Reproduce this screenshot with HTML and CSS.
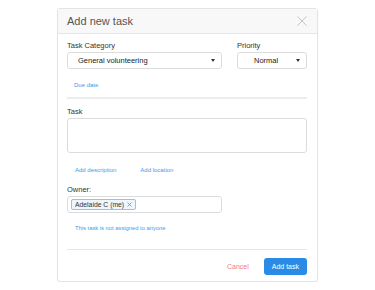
FILE: index.html
```html
<!DOCTYPE html>
<html lang="en">
<head>
  <meta charset="utf-8">
  <title>Add new task</title>
  <link rel="stylesheet" href="styles.css">
</head>
<body>
  <div class="modal">
    <div class="modal-header">
      <h2>Add new task</h2>
      <span class="close">
        <svg width="10" height="10" viewBox="0 0 10 10"><path d="M0.5 0.5L9.5 9.5M9.5 0.5L0.5 9.5" stroke="#c4c4c4" stroke-width="1" fill="none"/></svg>
      </span>
    </div>
    <div class="modal-body">
      <div class="row">
        <div class="field category">
          <label>Task Category</label>
          <div class="select">
            <span class="value">General volunteering</span>
            <span class="caret"></span>
          </div>
        </div>
        <div class="field priority">
          <label>Priority</label>
          <div class="select center">
            <span class="value">Normal</span>
            <span class="caret"></span>
          </div>
        </div>
      </div>
      <a class="link due" href="#">Due date</a>
      <hr>
      <label>Task</label>
      <div class="textarea"></div>
      <div class="links">
        <a class="link" href="#">Add description</a>
        <a class="link" href="#">Add location</a>
      </div>
      <label class="owner-label">Owner:</label>
      <div class="owner-input">
        <span class="chip">Adelaide C (me)
          <svg width="5" height="5" viewBox="0 0 5 5"><path d="M0.5 0.5L4.5 4.5M4.5 0.5L0.5 4.5" stroke="#3d9be9" stroke-width="0.8" fill="none"/></svg>
        </span>
      </div>
      <a class="link assign" href="#">This task is not assigned to anyone</a>
      <hr class="bottom">
      <div class="footer">
        <a class="cancel" href="#">Cancel</a>
        <button class="btn">Add task</button>
      </div>
    </div>
  </div>
</body>
</html>
```

FILE: styles.css
```css
*, :after, :before { box-sizing: border-box; }
body {
  margin: 0;
  padding: 8px 0 0 57px;
  background: #fff;
  font-family: "Liberation Sans", Arial, sans-serif;
  color: #333;
}
.modal {
  width: 261px;
  border: 1px solid #e4e4e4;
  border-radius: 3px;
  background: #fff;
  box-shadow: 0 1px 2px rgba(0, 0, 0, .04);
}
.modal-header {
  display: flex;
  justify-content: space-between;
  align-items: center;
  height: 25px;
  padding: 0 10px 0 9px;
  background: #f8f8f8;
  border-bottom: 1px solid #e6e6e6;
}
.modal-header h2 {
  margin: 0;
  font-size: 11px;
  font-weight: normal;
  color: #555;
}
.close { display: flex; }
.modal-body {
  padding: 7px 10px 6px 9px;
}
label {
  display: block;
  font-size: 7.5px;
  line-height: 10px;
  color: #333;
  margin-bottom: 1px;
}
.row {
  display: flex;
  justify-content: space-between;
}
.category { width: 155px; }
.priority { width: 70px; }
.select {
  display: flex;
  align-items: center;
  justify-content: space-between;
  height: 17px;
  padding: 0 6px 0 10px;
  border: 1px solid #dcdcdc;
  border-radius: 3px;
  font-size: 7.5px;
  color: #222;
}
.select.center { padding-left: 16px; }
.caret {
  width: 0;
  height: 0;
  border-left: 2px solid transparent;
  border-right: 2px solid transparent;
  border-top: 3px solid #333;
}
.link {
  display: block;
  font-size: 6px;
  line-height: 8px;
  color: #3d9be9;
  text-decoration: none;
}
.due {
  margin: 12px 0 0 7px;
}
hr {
  border: none;
  border-top: 2px solid #ececec;
  margin: 8px 0 8px;
}
.textarea {
  height: 35px;
  border: 1px solid #dcdcdc;
  border-radius: 3px;
}
.links {
  display: flex;
  gap: 24px;
  margin: 13px 0 0 8px;
}
.owner-label { margin-top: 11px; }
.owner-input {
  display: flex;
  align-items: center;
  width: 155px;
  height: 17px;
  padding: 0 3px;
  border: 1px solid #dcdcdc;
  border-radius: 3px;
}
.chip {
  display: inline-flex;
  align-items: center;
  gap: 3px;
  height: 11px;
  padding: 0 3px;
  border: 1px solid #8fc4f0;
  border-radius: 2px;
  background: #eef6fd;
  font-size: 6.8px;
  color: #333;
}
.assign {
  margin: 11px 0 0 8px;
  font-size: 5.8px;
}
hr.bottom {
  border-top: 1px solid #e6e6e6;
  margin: 17px 0 8px;
}
.footer {
  display: flex;
  justify-content: flex-end;
  align-items: center;
  gap: 15px;
}
.cancel {
  font-size: 7px;
  color: #f07a8c;
  text-decoration: none;
}
.btn {
  height: 17px;
  padding: 0 8px;
  border: none;
  border-radius: 3px;
  background: #2a8be6;
  color: #fff;
  font-family: inherit;
  font-size: 7px;
}
```
